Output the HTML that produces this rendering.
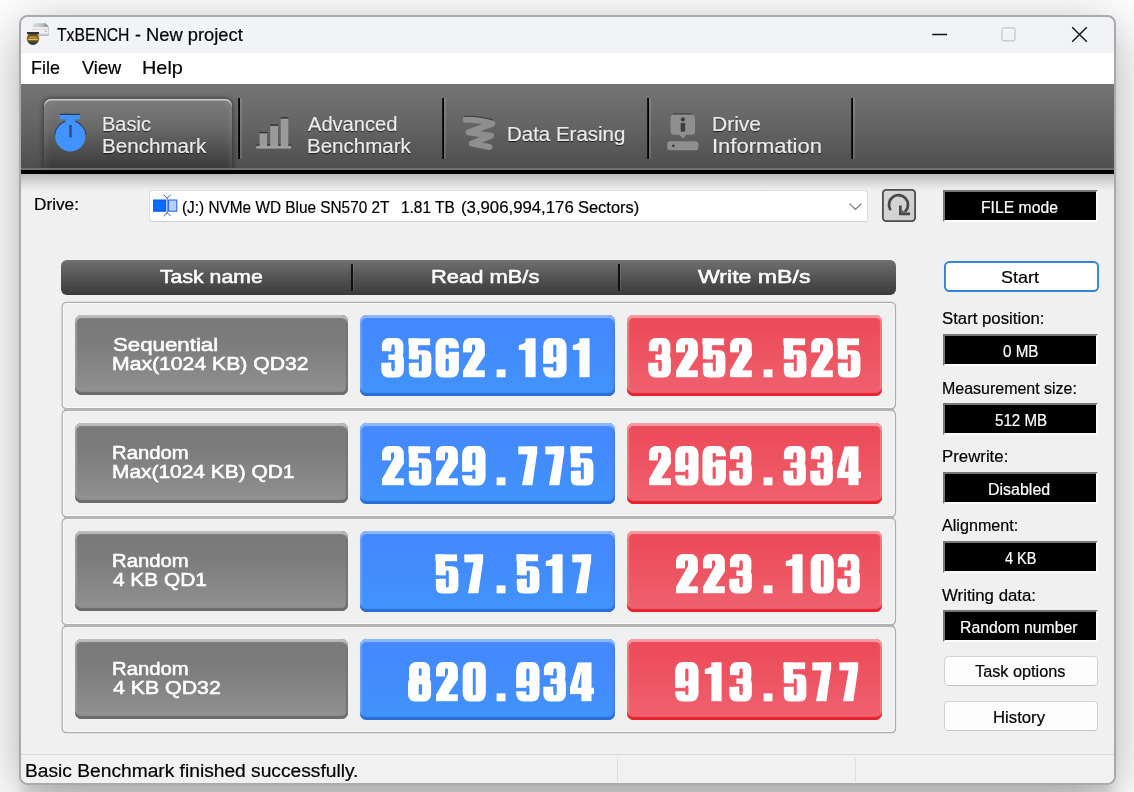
<!DOCTYPE html>
<html>
<head>
<meta charset="utf-8">
<title>TxBENCH - New project</title>
<style>
html,body{margin:0;padding:0;}
body{width:1134px;height:792px;overflow:hidden;position:relative;font-family:"Liberation Sans",sans-serif;background:#fff;}
.abs{position:absolute;}
.t{position:absolute;white-space:nowrap;transform-origin:0 0;line-height:1;-webkit-text-stroke:0.2px currentColor;}
.sh{text-shadow:0 1px 1px rgba(0,0,0,0.75);}
.md{-webkit-text-stroke:0.55px #fff;}
#win{left:19.2px;top:15.2px;width:1096.7px;height:769.7px;border-radius:8.5px;background:#aaaaaa;
  box-shadow:0 12px 54px rgba(0,0,0,0.325),0 18px 10px -4px rgba(0,0,0,0.10);}
#wi{position:absolute;left:1.7px;top:1.7px;right:1.7px;bottom:1.7px;border-radius:7px;background:#f0f0f0;overflow:hidden;}
#in{position:absolute;left:-20.9px;top:-16.9px;width:1134px;height:792px;}
#title{left:20px;top:16px;width:1096px;height:37.2px;background:#f2f3f6;}
#menu{left:20px;top:53.2px;width:1096px;height:31px;background:#ffffff;}
#tool{left:20px;top:84px;width:1096px;height:85px;background:linear-gradient(to bottom,#747474 0,#646464 50%,#4e4e4e 100%);}
#tline{left:20px;top:168px;width:1096px;height:5.7px;background:linear-gradient(to bottom,#707070 0,#707070 1.6px,#000 1.8px,#000 100%);}
#tshade{left:20px;top:173.7px;width:1096px;height:17px;background:linear-gradient(to bottom,#bbbbbb 0,#d3d3d3 40%,#e8e8e8 80%,#f0f0f0 100%);}
.sep{position:absolute;top:98.5px;width:2px;height:60.5px;background:linear-gradient(to right,#2a2a2a,#000 50%,#000);box-shadow:2px 0 0 rgba(255,255,255,0.13);}
#btab{left:44.4px;top:99px;width:187.6px;height:70px;border-radius:7px 7px 0 0;
  background:linear-gradient(to bottom,#7d7d7d 0,#686868 42%,#393939 100%);
  box-shadow:inset 0 1.6px 0 #cfcfcf, inset 7px 0 6px -5px rgba(255,255,255,0.10), inset -7px 0 6px -5px rgba(255,255,255,0.10), 0 0 5px 1px rgba(0,0,0,0.42);}
.bk{position:absolute;left:943.3px;width:154.7px;height:32px;background:#000;box-sizing:border-box;border:2px solid;border-color:#767676 #fafafa #fafafa #767676;}
.btn{position:absolute;left:944.5px;width:153.2px;height:29.8px;background:#fdfdfd;border:1px solid #d2d2d2;border-bottom-color:#c4c4c4;border-radius:4.5px;box-sizing:border-box;}
#hdr{left:61px;top:259.8px;width:835px;height:35.4px;border-radius:6px;background:linear-gradient(to bottom,#707070 0,#565656 45%,#3b3b3b 100%);}
.hsep{position:absolute;top:264px;width:1.6px;height:27px;background:#101010;box-shadow:1px 0 0 rgba(255,255,255,0.10);}
.row{position:absolute;left:61px;width:835px;height:108px;box-sizing:border-box;border-radius:5.5px;background:#f0f0f0;box-shadow:inset 0 0 0 1.45px #adadad, inset 0 0 0 2.5px #f9f9f9;transform:translate(0.3px,-0.45px);}
.gb{position:absolute;left:75.2px;width:272.8px;height:80.4px;border-radius:6.5px;box-sizing:border-box;
  background:linear-gradient(to bottom,#797979 0,#7c7c7c 35%,#919191 97%);
  box-shadow:inset 0 3px 1px #bcbcbc, inset 0 -3px 1px #6b6b6b, inset 2px 0 1px #9a9a9a, inset -2px 0 1px #707070;}
.bb{position:absolute;left:360.3px;width:254.9px;height:80.8px;border-radius:6.5px;box-sizing:border-box;
  background:linear-gradient(to bottom,#4488ff 0,#438cfd 50%,#4094fa 100%);
  box-shadow:inset 0 3px 1px #8fb9ff, inset 0 -3px 1px #2c6dd6, inset 2px 0 1px #6aa3ff, inset -2px 0 1px #3f7fe8;}
.rb{position:absolute;left:627.4px;width:254.9px;height:80.8px;border-radius:6.5px;box-sizing:border-box;
  background:linear-gradient(to bottom,#ec4957 0,#ee5462 50%,#f06270 100%);
  box-shadow:inset 0 3px 1px #f69ba3, inset 0 -3px 1px #e8222e, inset 2px 0 1px #f27c86, inset -2px 0 1px #f27c86;}
.num{position:absolute;color:#fff;font-size:54.4px;font-weight:bold;line-height:1;text-align:center;white-space:nowrap;-webkit-text-stroke:1.2px #fff;display:flex;justify-content:center;}
.num>i{font-style:normal;display:block;transform:scaleX(0.86);}
</style>
</head>
<body>
<svg width="0" height="0" style="position:absolute"><defs>
<mask id="g0" maskUnits="userSpaceOnUse" x="0" y="-1" width="27" height="42"><rect x="2.7" y="0.0" width="23.10" height="39.60" rx="7.199999999999999" ry="8.4" fill="#fff"/><rect x="12.8" y="6.2" width="2.90" height="27.10" rx="1.45" ry="1.45" fill="#000"/></mask>
<mask id="g8" maskUnits="userSpaceOnUse" x="0" y="-1" width="27" height="42"><rect x="3.0" y="0.0" width="21.10" height="22.00" rx="6.6" ry="7.6" fill="#fff"/><rect x="2.0" y="14.2" width="23.10" height="25.40" rx="6.6" ry="7.6" fill="#fff"/><rect x="12.8" y="6.2" width="2.80" height="7.70" rx="1.4" ry="1.4" fill="#000"/><rect x="12.7" y="22" width="3.40" height="10.80" rx="1.6" ry="1.6" fill="#000"/></mask>
<mask id="g3" maskUnits="userSpaceOnUse" x="0" y="-1" width="27" height="42"><rect x="2.9" y="0.0" width="21.50" height="22.00" rx="6.6" ry="7.6" fill="#fff"/><rect x="2.3" y="14.2" width="22.60" height="25.40" rx="6.6" ry="7.6" fill="#fff"/><rect x="12.5" y="6.2" width="3.10" height="8.80" rx="1.5" ry="1.5" fill="#000"/><rect x="12.5" y="10" width="3.10" height="6.40" fill="#000"/><rect x="-1" y="13.4" width="15.00" height="3.00" fill="#000"/><rect x="-1" y="13.4" width="10.40" height="11.10" fill="#000"/><rect x="-1" y="22" width="15.00" height="2.50" fill="#000"/><rect x="12.5" y="22" width="3.10" height="8.00" fill="#000"/><rect x="12.5" y="24" width="3.10" height="9.30" rx="1.5" ry="1.5" fill="#000"/></mask>
<mask id="g2" maskUnits="userSpaceOnUse" x="0" y="-1" width="27" height="42"><rect x="3.0" y="0.0" width="21.80" height="34.00" rx="6.6" ry="7.6" fill="#fff"/><rect x="-1" y="17.6" width="29.00" height="23.40" fill="#000"/><rect x="12.0" y="6.2" width="3.10" height="12.80" rx="1.5" ry="1.5" fill="#000"/><rect x="-1" y="14.4" width="14.20" height="3.60" fill="#000"/><polygon points="15.0,12 24.8,12 24.8,17.8 14.9,32.8 14.9,35 3.2,35 3.2,32.8" fill="#fff"/><rect x="3.0" y="32.3" width="21.80" height="6.90" fill="#fff"/></mask>
<mask id="g5" maskUnits="userSpaceOnUse" x="0" y="-1" width="27" height="42"><rect x="2.6" y="0.4" width="21.50" height="6.80" fill="#fff"/><rect x="2.6" y="0.4" width="9.50" height="21.00" fill="#fff"/><path d="M6 12.3H19Q25.4 12.3 25.4 19.6V32Q25.4 39.6 19 39.6H9Q2.6 39.6 2.6 32V24.7H6Z" fill="#fff"/><rect x="12.8" y="16.6" width="3.00" height="16.80" rx="1.4" ry="1.4" fill="#000"/><rect x="-1" y="21.4" width="14.60" height="3.30" fill="#000"/><rect x="-1" y="7.2" width="3.60" height="33.80" fill="#000"/></mask>
<mask id="g6" maskUnits="userSpaceOnUse" x="0" y="-1" width="27" height="42"><rect x="2.5" y="0.0" width="23.40" height="39.60" rx="7.199999999999999" ry="8.4" fill="#fff"/><rect x="12.6" y="20.4" width="3.20" height="12.70" rx="1.5" ry="1.5" fill="#000"/><rect x="12.6" y="6.7" width="3.20" height="9.50" rx="1.5" ry="1.5" fill="#000"/><rect x="14.4" y="10.3" width="13.60" height="3.50" fill="#000"/></mask>
<mask id="g9" maskUnits="userSpaceOnUse" x="0" y="-1" width="27" height="42"><g transform="rotate(180 14.02 19.8)"><rect x="2.5" y="0.0" width="23.40" height="39.60" rx="7.199999999999999" ry="8.4" fill="#fff"/><rect x="12.6" y="20.4" width="3.20" height="12.70" rx="1.5" ry="1.5" fill="#000"/><rect x="12.6" y="6.7" width="3.20" height="9.50" rx="1.5" ry="1.5" fill="#000"/><rect x="14.4" y="10.3" width="13.60" height="3.50" fill="#000"/></g></mask>
<mask id="g4" maskUnits="userSpaceOnUse" x="0" y="-1" width="27" height="42"><rect x="13.4" y="0.4" width="10.10" height="38.80" fill="#fff"/><rect x="2.0" y="25.8" width="24.00" height="6.30" fill="#fff"/><polygon points="9.6,0.4 14.6,0.4 14.6,27 2.0,27 2.0,25.8" fill="#fff"/><polygon points="13.4,9.0 13.4,25.8 9.6,25.8" fill="#000"/></mask>
<mask id="g7" maskUnits="userSpaceOnUse" x="0" y="-1" width="27" height="42"><rect x="4.3" y="0.4" width="18.80" height="8.00" fill="#fff"/><polygon points="13.6,0.4 23.1,0.4 23.1,6.5 18.4,39.2 8.0,39.2 13.6,8.4" fill="#fff"/></mask>
<mask id="g1" maskUnits="userSpaceOnUse" x="0" y="-1" width="27" height="42"><rect x="11.4" y="0.4" width="10.20" height="38.80" fill="#fff"/><path d="M4.8 6.9Q12.2 5.8 14.8 0.4H21V11.9H4.8Z" fill="#fff"/></mask>
<mask id="gp" maskUnits="userSpaceOnUse" x="0" y="-1" width="27" height="42"><rect x="9.6" y="31.4" width="8.90" height="7.90" fill="#fff"/></mask>
</defs></svg>
<div id="win" class="abs"><div id="wi"><div id="in">
<div id="title" class="abs"></div>
<div id="menu" class="abs"></div>
<div id="tool" class="abs"></div>
<div id="tshade" class="abs"></div>
<div id="btab" class="abs"></div>
<div id="tline" class="abs"></div>
<div class="sep" style="left:238.2px"></div>
<div class="sep" style="left:441.6px"></div>
<div class="sep" style="left:646.8px"></div>
<div class="sep" style="left:850.6px"></div>
<span class="t" style="left:56.69px;top:26.76px;font-size:17.73px;color:#000;transform:scaleX(0.8865);">TxBENCH</span>
<span class="t" style="left:134.70px;top:26.76px;font-size:17.73px;color:#000;transform:scaleX(1.0006);">-</span>
<span class="t" style="left:145.53px;top:26.76px;font-size:17.73px;color:#000;transform:scaleX(1.0344);">New project</span>
<span class="t" style="left:31.37px;top:58.97px;font-size:18.31px;color:#000;transform:scaleX(0.9781);">File</span>
<span class="t" style="left:81.91px;top:58.97px;font-size:18.31px;color:#000;transform:scaleX(0.9979);">View</span>
<span class="t" style="left:142.41px;top:58.97px;font-size:18.31px;color:#000;transform:scaleX(1.0864);">Help</span>
<svg class="abs" style="left:920px;top:16px" width="196" height="38" viewBox="0 0 196 38">
<path d="M12.2 18.5H27" stroke="#111" stroke-width="1.3" fill="none"/>
<rect x="82" y="11.9" width="13" height="13" rx="1.8" fill="none" stroke="#c4c4c4" stroke-width="1.2"/>
<path d="M152.2 11.2L166.8 25.8M166.8 11.2L152.2 25.8" stroke="#111" stroke-width="1.4" fill="none"/>
</svg>
<svg class="abs" style="left:22px;top:18px" width="34" height="32" viewBox="22 18 34 32">
<defs>
<linearGradient id="ig1" x1="0" y1="0" x2="1" y2="0"><stop offset="0" stop-color="#e2e2e2"/><stop offset="0.6" stop-color="#bdbdbd"/><stop offset="1" stop-color="#868686"/></linearGradient>
<linearGradient id="ig2" x1="0" y1="0" x2="0" y2="1"><stop offset="0" stop-color="#f6f6f6"/><stop offset="1" stop-color="#9c9c9c"/></linearGradient>
<linearGradient id="ig3" x1="0" y1="0" x2="0" y2="1"><stop offset="0" stop-color="#3a3014"/><stop offset="0.35" stop-color="#86641a"/><stop offset="0.6" stop-color="#9a7420"/><stop offset="0.78" stop-color="#32442c"/><stop offset="1" stop-color="#1f3a2c"/></linearGradient>
</defs>
<path d="M31.8 26.8H48.8V35.6H31.8Z" fill="#f0f0f0"/>
<path d="M33.6 23.3H45.8L48.8 26.9H31.8Z" fill="url(#ig1)"/>
<path d="M32 29.3H48.6" stroke="#d2d2d2" stroke-width="0.8"/>
<rect x="38" y="33.1" width="10.8" height="2.6" fill="url(#ig2)"/>
<path d="M48.4 27V35.4" stroke="#c4c4c4" stroke-width="0.8"/>
<rect x="45.2" y="30.8" width="1.1" height="1.1" fill="#cf4a4a"/>
<ellipse cx="33" cy="38.6" rx="6.3" ry="6.3" fill="url(#ig3)"/>
<rect x="26.9" y="31.9" width="12.2" height="2" rx="0.6" fill="#27363c"/>
<path d="M28.4 39.4H37.6" stroke="#ecd890" stroke-width="0.9"/>
<path d="M29.4 37.2H36.6" stroke="#d8b050" stroke-width="1.2" opacity="0.8"/>
</svg>

<span class="t sh" style="left:102.10px;top:114.34px;font-size:20.35px;color:#ececec;transform:scaleX(0.9829);">Basic</span>
<span class="t sh" style="left:102.05px;top:135.64px;font-size:20.35px;color:#ececec;transform:scaleX(1.0125);">Benchmark</span>
<span class="t sh" style="left:307.60px;top:113.74px;font-size:20.35px;color:#ececec;transform:scaleX(0.9873);">Advanced</span>
<span class="t sh" style="left:306.76px;top:135.64px;font-size:20.35px;color:#ececec;transform:scaleX(1.0085);">Benchmark</span>
<span class="t sh" style="left:506.96px;top:123.94px;font-size:20.35px;color:#ececec;transform:scaleX(1.0064);">Data Erasing</span>
<span class="t sh" style="left:712.02px;top:114.34px;font-size:20.35px;color:#ececec;transform:scaleX(1.0319);">Drive</span>
<span class="t sh" style="left:711.72px;top:135.64px;font-size:20.35px;color:#ececec;transform:scaleX(1.0802);">Information</span>
<svg class="abs" style="left:50px;top:108px" width="42" height="50" viewBox="50 108 42 50">
<path d="M59.8 114.4H79.8" stroke="#23344f" stroke-width="1.3"/>
<path d="M54.66 135.03A15.7 15.7 0 0 1 65.45 121.47M75.15 121.47A15.7 15.7 0 0 1 85.94 135.03" stroke="#263c63" stroke-width="1.3" fill="none"/>
<rect x="59.8" y="114.9" width="20" height="4.5" fill="#4292ff"/>
<path d="M66.3 119H74.3L75.8 123H64.8Z" fill="#4292ff"/>
<circle cx="70.3" cy="136.4" r="15.1" fill="#4292ff"/>
<rect x="69.2" y="125" width="2.6" height="12.4" fill="#34507f"/>
</svg>
<svg class="abs" style="left:254px;top:114px" width="40" height="38" viewBox="254 114 40 38">
<g fill="#9a9a9a">
<rect x="259.6" y="133" width="7.4" height="13.5"/>
<rect x="270.2" y="125.6" width="7.8" height="21"/>
<rect x="280.7" y="118.2" width="7.6" height="28.5"/>
<rect x="256.3" y="145.6" width="34.8" height="3" fill="#a2a2a2"/>
</g>
<g stroke="#2c2c2c" stroke-width="1.2"><path d="M259.4 132.6H267.2M270 125.2H278.2M280.5 117.8H288.5"/><path d="M256.3 145.1H259.6M267 145.1H270.2M278 145.1H280.7M288.3 145.1H291.1" stroke-width="1"/></g>
</svg>
<svg class="abs" style="left:458px;top:110px" width="42" height="44" viewBox="458 110 42 44">
<path d="M465.8 119.8C474 119.6 484 121 492.2 123.6L468.6 132.4L491 135.8L471.8 143.6L489.4 147" fill="none" stroke="#8e8e8e" stroke-width="6" stroke-linejoin="round" stroke-linecap="round"/>
<path d="M464.5 116.4C474 116 484 117.2 493 120" fill="none" stroke="#2e2e2e" stroke-width="1.1" opacity="0.8"/>
</svg>
<svg class="abs" style="left:664px;top:110px" width="38" height="44" viewBox="664 110 38 44">
<path d="M670.6 117.9a3.5 3.5 0 0 1 3.5 -3.5H691.5a3.5 3.5 0 0 1 3.5 3.5V131.3a3.5 3.5 0 0 1 -3.5 3.5H686.5L682.9 138.6L679.3 134.8H674.1a3.5 3.5 0 0 1 -3.5 -3.5Z" fill="#8f8f8f"/>
<path d="M673 113.9H692.5" stroke="#2c2c2c" stroke-width="1" opacity="0.8"/>
<circle cx="682.9" cy="119.4" r="2.1" fill="#3d3d3d"/>
<rect x="680.7" y="123" width="4.4" height="8.6" fill="#3d3d3d"/>
<rect x="667.2" y="141.3" width="31.2" height="9" rx="3" fill="#8f8f8f"/>
<circle cx="673.3" cy="145.8" r="1.4" fill="#3d3d3d"/>
</svg>

<span class="t" style="left:33.82px;top:196.30px;font-size:16.28px;color:#000;transform:scaleX(1.0574);">Drive:</span>
<div class="abs" style="left:149.5px;top:190.2px;width:718.5px;height:31.8px;box-sizing:border-box;background:#fff;border:1px solid #dcdcdc;border-bottom-color:#cfcfcf;border-radius:3px;"></div>
<span class="t" style="left:182.38px;top:199.40px;font-size:16.28px;color:#000;transform:scaleX(0.9444);">(J:) NVMe WD Blue SN570 2T</span>
<span class="t" style="left:401.44px;top:199.40px;font-size:16.28px;color:#000;transform:scaleX(0.9484);">1.81 TB</span>
<span class="t" style="left:461.19px;top:199.40px;font-size:16.28px;color:#000;transform:scaleX(1.0301);">(3,906,994,176</span>
<span class="t" style="left:577.86px;top:199.40px;font-size:16.28px;color:#000;transform:scaleX(1.0111);">Sectors)</span>
<svg class="abs" style="left:151px;top:192px" width="30" height="27" viewBox="151 192 30 27">
<rect x="153.6" y="200" width="12.0" height="11.2" fill="#0b6cff" stroke="#0a55d8" stroke-width="1"/>
<rect x="168.6" y="200" width="8.2" height="11.2" fill="#b4d1ff" stroke="#1a5fd6" stroke-width="1"/>
<path d="M167.2 197.8V213.2M163.6 194.8L167.2 198L170.8 194.8M163.6 216L167.2 212.9L170.8 216" fill="none" stroke="#2058d0" stroke-width="0.9"/>
</svg>
<svg class="abs" style="left:846px;top:200px" width="20" height="14" viewBox="846 200 20 14"><path d="M849.5 203.6L855.4 209.4L861.3 203.6" fill="none" stroke="#767676" stroke-width="1.25"/></svg>
<div class="abs" style="left:882px;top:189px;width:34px;height:33px;box-sizing:border-box;border-radius:4.5px;background:linear-gradient(135deg,#dadada,#cccccc);box-shadow:inset 0 0 0 1.8px #4c4c4c;"></div>
<svg class="abs" style="left:884px;top:190px" width="30" height="30" viewBox="884 190 30 30">
<path d="M890.11 209.16A9.5 9.5 0 1 1 905.6 211.0" fill="none" stroke="#484848" stroke-width="2.8" stroke-linecap="round"/>
<path d="M900.4 205.6V213.9H910.1" fill="none" stroke="#484848" stroke-width="2.7"/><path d="M901.5 209.5L906 213H901.5Z" fill="#6a6a6a"/>
</svg>

<div id="hdr" class="abs"></div>
<div class="hsep" style="left:351.2px"></div><div class="hsep" style="left:618.3px"></div>
<span class="t md" style="left:159.78px;top:266.73px;font-size:19.19px;color:#fff;transform:scaleX(1.1069);">Task name</span>
<span class="t md" style="left:431.35px;top:266.73px;font-size:19.19px;color:#fff;transform:scaleX(1.1417);">Read mB/s</span>
<span class="t md" style="left:697.78px;top:266.73px;font-size:19.19px;color:#fff;transform:scaleX(1.2032);">Write mB/s</span>
<div class="row" style="top:302px"></div>
<div class="gb" style="top:315.0px"></div><div class="bb" style="top:315.0px"></div><div class="rb" style="top:315.0px"></div>
<span class="t md" style="left:112.60px;top:335.55px;font-size:18.46px;color:#fff;transform:scaleX(1.2067);">Sequential</span>
<span class="t md" style="left:111.90px;top:354.85px;font-size:18.46px;color:#fff;transform:scaleX(1.1486);">Max(1024 KB) QD32</span>
<svg class="abs" style="left:379.20px;top:336.60px" width="216.0" height="42" viewBox="0 -1 216.0 42"><g transform="translate(0.0 0)"><rect x="0" y="-1" width="27" height="42" fill="#fff" mask="url(#g3)"/></g><g transform="translate(27.0 0)"><rect x="0" y="-1" width="27" height="42" fill="#fff" mask="url(#g5)"/></g><g transform="translate(54.0 0)"><rect x="0" y="-1" width="27" height="42" fill="#fff" mask="url(#g6)"/></g><g transform="translate(81.0 0)"><rect x="0" y="-1" width="27" height="42" fill="#fff" mask="url(#g2)"/></g><g transform="translate(108.0 0)"><rect x="0" y="-1" width="27" height="42" fill="#fff" mask="url(#gp)"/></g><g transform="translate(135.0 0)"><rect x="0" y="-1" width="27" height="42" fill="#fff" mask="url(#g1)"/></g><g transform="translate(162.0 0)"><rect x="0" y="-1" width="27" height="42" fill="#fff" mask="url(#g9)"/></g><g transform="translate(189.0 0)"><rect x="0" y="-1" width="27" height="42" fill="#fff" mask="url(#g1)"/></g></svg>
<svg class="abs" style="left:646.30px;top:336.60px" width="216.0" height="42" viewBox="0 -1 216.0 42"><g transform="translate(0.0 0)"><rect x="0" y="-1" width="27" height="42" fill="#fff" mask="url(#g3)"/></g><g transform="translate(27.0 0)"><rect x="0" y="-1" width="27" height="42" fill="#fff" mask="url(#g2)"/></g><g transform="translate(54.0 0)"><rect x="0" y="-1" width="27" height="42" fill="#fff" mask="url(#g5)"/></g><g transform="translate(81.0 0)"><rect x="0" y="-1" width="27" height="42" fill="#fff" mask="url(#g2)"/></g><g transform="translate(108.0 0)"><rect x="0" y="-1" width="27" height="42" fill="#fff" mask="url(#gp)"/></g><g transform="translate(135.0 0)"><rect x="0" y="-1" width="27" height="42" fill="#fff" mask="url(#g5)"/></g><g transform="translate(162.0 0)"><rect x="0" y="-1" width="27" height="42" fill="#fff" mask="url(#g2)"/></g><g transform="translate(189.0 0)"><rect x="0" y="-1" width="27" height="42" fill="#fff" mask="url(#g5)"/></g></svg>
<div class="row" style="top:410px"></div>
<div class="gb" style="top:423.0px"></div><div class="bb" style="top:423.0px"></div><div class="rb" style="top:423.0px"></div>
<span class="t md" style="left:111.98px;top:443.55px;font-size:18.46px;color:#fff;transform:scaleX(1.0984);">Random</span>
<span class="t md" style="left:111.93px;top:462.85px;font-size:18.46px;color:#fff;transform:scaleX(1.1339);">Max(1024 KB) QD1</span>
<svg class="abs" style="left:379.20px;top:444.60px" width="216.0" height="42" viewBox="0 -1 216.0 42"><g transform="translate(0.0 0)"><rect x="0" y="-1" width="27" height="42" fill="#fff" mask="url(#g2)"/></g><g transform="translate(27.0 0)"><rect x="0" y="-1" width="27" height="42" fill="#fff" mask="url(#g5)"/></g><g transform="translate(54.0 0)"><rect x="0" y="-1" width="27" height="42" fill="#fff" mask="url(#g2)"/></g><g transform="translate(81.0 0)"><rect x="0" y="-1" width="27" height="42" fill="#fff" mask="url(#g9)"/></g><g transform="translate(108.0 0)"><rect x="0" y="-1" width="27" height="42" fill="#fff" mask="url(#gp)"/></g><g transform="translate(135.0 0)"><rect x="0" y="-1" width="27" height="42" fill="#fff" mask="url(#g7)"/></g><g transform="translate(162.0 0)"><rect x="0" y="-1" width="27" height="42" fill="#fff" mask="url(#g7)"/></g><g transform="translate(189.0 0)"><rect x="0" y="-1" width="27" height="42" fill="#fff" mask="url(#g5)"/></g></svg>
<svg class="abs" style="left:646.30px;top:444.60px" width="216.0" height="42" viewBox="0 -1 216.0 42"><g transform="translate(0.0 0)"><rect x="0" y="-1" width="27" height="42" fill="#fff" mask="url(#g2)"/></g><g transform="translate(27.0 0)"><rect x="0" y="-1" width="27" height="42" fill="#fff" mask="url(#g9)"/></g><g transform="translate(54.0 0)"><rect x="0" y="-1" width="27" height="42" fill="#fff" mask="url(#g6)"/></g><g transform="translate(81.0 0)"><rect x="0" y="-1" width="27" height="42" fill="#fff" mask="url(#g3)"/></g><g transform="translate(108.0 0)"><rect x="0" y="-1" width="27" height="42" fill="#fff" mask="url(#gp)"/></g><g transform="translate(135.0 0)"><rect x="0" y="-1" width="27" height="42" fill="#fff" mask="url(#g3)"/></g><g transform="translate(162.0 0)"><rect x="0" y="-1" width="27" height="42" fill="#fff" mask="url(#g3)"/></g><g transform="translate(189.0 0)"><rect x="0" y="-1" width="27" height="42" fill="#fff" mask="url(#g4)"/></g></svg>
<div class="row" style="top:518px"></div>
<div class="gb" style="top:531.0px"></div><div class="bb" style="top:531.0px"></div><div class="rb" style="top:531.0px"></div>
<span class="t md" style="left:111.98px;top:551.55px;font-size:18.46px;color:#fff;transform:scaleX(1.0984);">Random</span>
<span class="t md" style="left:113.18px;top:570.85px;font-size:18.46px;color:#fff;transform:scaleX(1.1299);">4 KB QD1</span>
<svg class="abs" style="left:433.20px;top:552.60px" width="162.0" height="42" viewBox="0 -1 162.0 42"><g transform="translate(0.0 0)"><rect x="0" y="-1" width="27" height="42" fill="#fff" mask="url(#g5)"/></g><g transform="translate(27.0 0)"><rect x="0" y="-1" width="27" height="42" fill="#fff" mask="url(#g7)"/></g><g transform="translate(54.0 0)"><rect x="0" y="-1" width="27" height="42" fill="#fff" mask="url(#gp)"/></g><g transform="translate(81.0 0)"><rect x="0" y="-1" width="27" height="42" fill="#fff" mask="url(#g5)"/></g><g transform="translate(108.0 0)"><rect x="0" y="-1" width="27" height="42" fill="#fff" mask="url(#g1)"/></g><g transform="translate(135.0 0)"><rect x="0" y="-1" width="27" height="42" fill="#fff" mask="url(#g7)"/></g></svg>
<svg class="abs" style="left:673.30px;top:552.60px" width="189.0" height="42" viewBox="0 -1 189.0 42"><g transform="translate(0.0 0)"><rect x="0" y="-1" width="27" height="42" fill="#fff" mask="url(#g2)"/></g><g transform="translate(27.0 0)"><rect x="0" y="-1" width="27" height="42" fill="#fff" mask="url(#g2)"/></g><g transform="translate(54.0 0)"><rect x="0" y="-1" width="27" height="42" fill="#fff" mask="url(#g3)"/></g><g transform="translate(81.0 0)"><rect x="0" y="-1" width="27" height="42" fill="#fff" mask="url(#gp)"/></g><g transform="translate(108.0 0)"><rect x="0" y="-1" width="27" height="42" fill="#fff" mask="url(#g1)"/></g><g transform="translate(135.0 0)"><rect x="0" y="-1" width="27" height="42" fill="#fff" mask="url(#g0)"/></g><g transform="translate(162.0 0)"><rect x="0" y="-1" width="27" height="42" fill="#fff" mask="url(#g3)"/></g></svg>
<div class="row" style="top:626px"></div>
<div class="gb" style="top:639.0px"></div><div class="bb" style="top:639.0px"></div><div class="rb" style="top:639.0px"></div>
<span class="t md" style="left:111.98px;top:659.55px;font-size:18.46px;color:#fff;transform:scaleX(1.0984);">Random</span>
<span class="t md" style="left:113.17px;top:678.85px;font-size:18.46px;color:#fff;transform:scaleX(1.1552);">4 KB QD32</span>
<svg class="abs" style="left:406.20px;top:660.60px" width="189.0" height="42" viewBox="0 -1 189.0 42"><g transform="translate(0.0 0)"><rect x="0" y="-1" width="27" height="42" fill="#fff" mask="url(#g8)"/></g><g transform="translate(27.0 0)"><rect x="0" y="-1" width="27" height="42" fill="#fff" mask="url(#g2)"/></g><g transform="translate(54.0 0)"><rect x="0" y="-1" width="27" height="42" fill="#fff" mask="url(#g0)"/></g><g transform="translate(81.0 0)"><rect x="0" y="-1" width="27" height="42" fill="#fff" mask="url(#gp)"/></g><g transform="translate(108.0 0)"><rect x="0" y="-1" width="27" height="42" fill="#fff" mask="url(#g9)"/></g><g transform="translate(135.0 0)"><rect x="0" y="-1" width="27" height="42" fill="#fff" mask="url(#g3)"/></g><g transform="translate(162.0 0)"><rect x="0" y="-1" width="27" height="42" fill="#fff" mask="url(#g4)"/></g></svg>
<svg class="abs" style="left:673.30px;top:660.60px" width="189.0" height="42" viewBox="0 -1 189.0 42"><g transform="translate(0.0 0)"><rect x="0" y="-1" width="27" height="42" fill="#fff" mask="url(#g9)"/></g><g transform="translate(27.0 0)"><rect x="0" y="-1" width="27" height="42" fill="#fff" mask="url(#g1)"/></g><g transform="translate(54.0 0)"><rect x="0" y="-1" width="27" height="42" fill="#fff" mask="url(#g3)"/></g><g transform="translate(81.0 0)"><rect x="0" y="-1" width="27" height="42" fill="#fff" mask="url(#gp)"/></g><g transform="translate(108.0 0)"><rect x="0" y="-1" width="27" height="42" fill="#fff" mask="url(#g5)"/></g><g transform="translate(135.0 0)"><rect x="0" y="-1" width="27" height="42" fill="#fff" mask="url(#g7)"/></g><g transform="translate(162.0 0)"><rect x="0" y="-1" width="27" height="42" fill="#fff" mask="url(#g7)"/></g></svg>
<div class="abs" style="left:64px;top:408px;width:829.6px;height:3px;background:#b4b4b4;transform:translateY(0.1px);"></div>
<div class="abs" style="left:64px;top:516px;width:829.6px;height:3px;background:#b4b4b4;transform:translateY(0.1px);"></div>
<div class="abs" style="left:64px;top:624px;width:829.6px;height:3px;background:#b4b4b4;transform:translateY(0.1px);"></div>

<div class="bk" style="top:189.8px"></div>
<span class="t" style="left:980.74px;top:198.57px;font-size:16.42px;color:#fff;transform:scaleX(0.9583);">FILE mode</span>
<div class="abs" style="left:943.8px;top:261px;width:154.8px;height:31.4px;box-sizing:border-box;border-radius:5.5px;background:#fefefe;box-shadow:inset 0 0 0 1.9px #3384d8;"></div>
<span class="t" style="left:1001.09px;top:270.35px;font-size:16.57px;color:#000;transform:scaleX(1.0840);">Start</span>
<span class="t" style="left:941.75px;top:310.37px;font-size:16.42px;color:#000;transform:scaleX(1.0210);">Start position:</span>
<div class="bk" style="top:333.7px"></div>
<span class="t" style="left:1002.59px;top:342.87px;font-size:16.42px;color:#fff;transform:scaleX(0.9269);">0 MB</span>
<span class="t" style="left:941.62px;top:379.77px;font-size:16.42px;color:#000;transform:scaleX(0.9734);">Measurement size:</span>
<div class="bk" style="top:402.8px"></div>
<span class="t" style="left:994.99px;top:412.07px;font-size:16.42px;color:#fff;transform:scaleX(0.9219);">512 MB</span>
<span class="t" style="left:941.55px;top:448.37px;font-size:16.42px;color:#000;transform:scaleX(1.0242);">Prewrite:</span>
<div class="bk" style="top:471.9px"></div>
<span class="t" style="left:988.22px;top:480.77px;font-size:16.42px;color:#fff;transform:scaleX(0.9738);">Disabled</span>
<span class="t" style="left:942.20px;top:517.37px;font-size:16.42px;color:#000;transform:scaleX(0.9836);">Alignment:</span>
<div class="bk" style="top:541.0px"></div>
<span class="t" style="left:1005.21px;top:549.97px;font-size:16.42px;color:#fff;transform:scaleX(0.8806);">4 KB</span>
<span class="t" style="left:942.12px;top:586.67px;font-size:16.42px;color:#000;transform:scaleX(1.0240);">Writing data:</span>
<div class="bk" style="top:610.0px"></div>
<span class="t" style="left:959.94px;top:618.97px;font-size:16.42px;color:#fff;transform:scaleX(0.9609);">Random number</span>
<div class="btn" style="top:656.4px"></div>
<span class="t" style="left:974.97px;top:663.27px;font-size:16.42px;color:#000;transform:scaleX(0.9910);">Task options</span>
<div class="btn" style="top:701px"></div>
<span class="t" style="left:992.86px;top:708.67px;font-size:16.42px;color:#000;transform:scaleX(1.0188);">History</span>

<div class="abs" style="left:20px;top:754.2px;width:1096px;height:1px;background:#d9d9d9;"></div>
<div class="abs" style="left:20px;top:755.2px;width:1096px;height:30px;background:#f1f1f1;"></div>
<div class="abs" style="left:617px;top:758px;width:1px;height:24px;background:#dedede;"></div>
<div class="abs" style="left:855px;top:758px;width:1px;height:24px;background:#dedede;"></div>
<span class="t" style="left:24.66px;top:761.78px;font-size:18.90px;color:#000;transform:scaleX(1.0157);">Basic Benchmark finished successfully.</span>

</div></div></div>
</body>
</html>
